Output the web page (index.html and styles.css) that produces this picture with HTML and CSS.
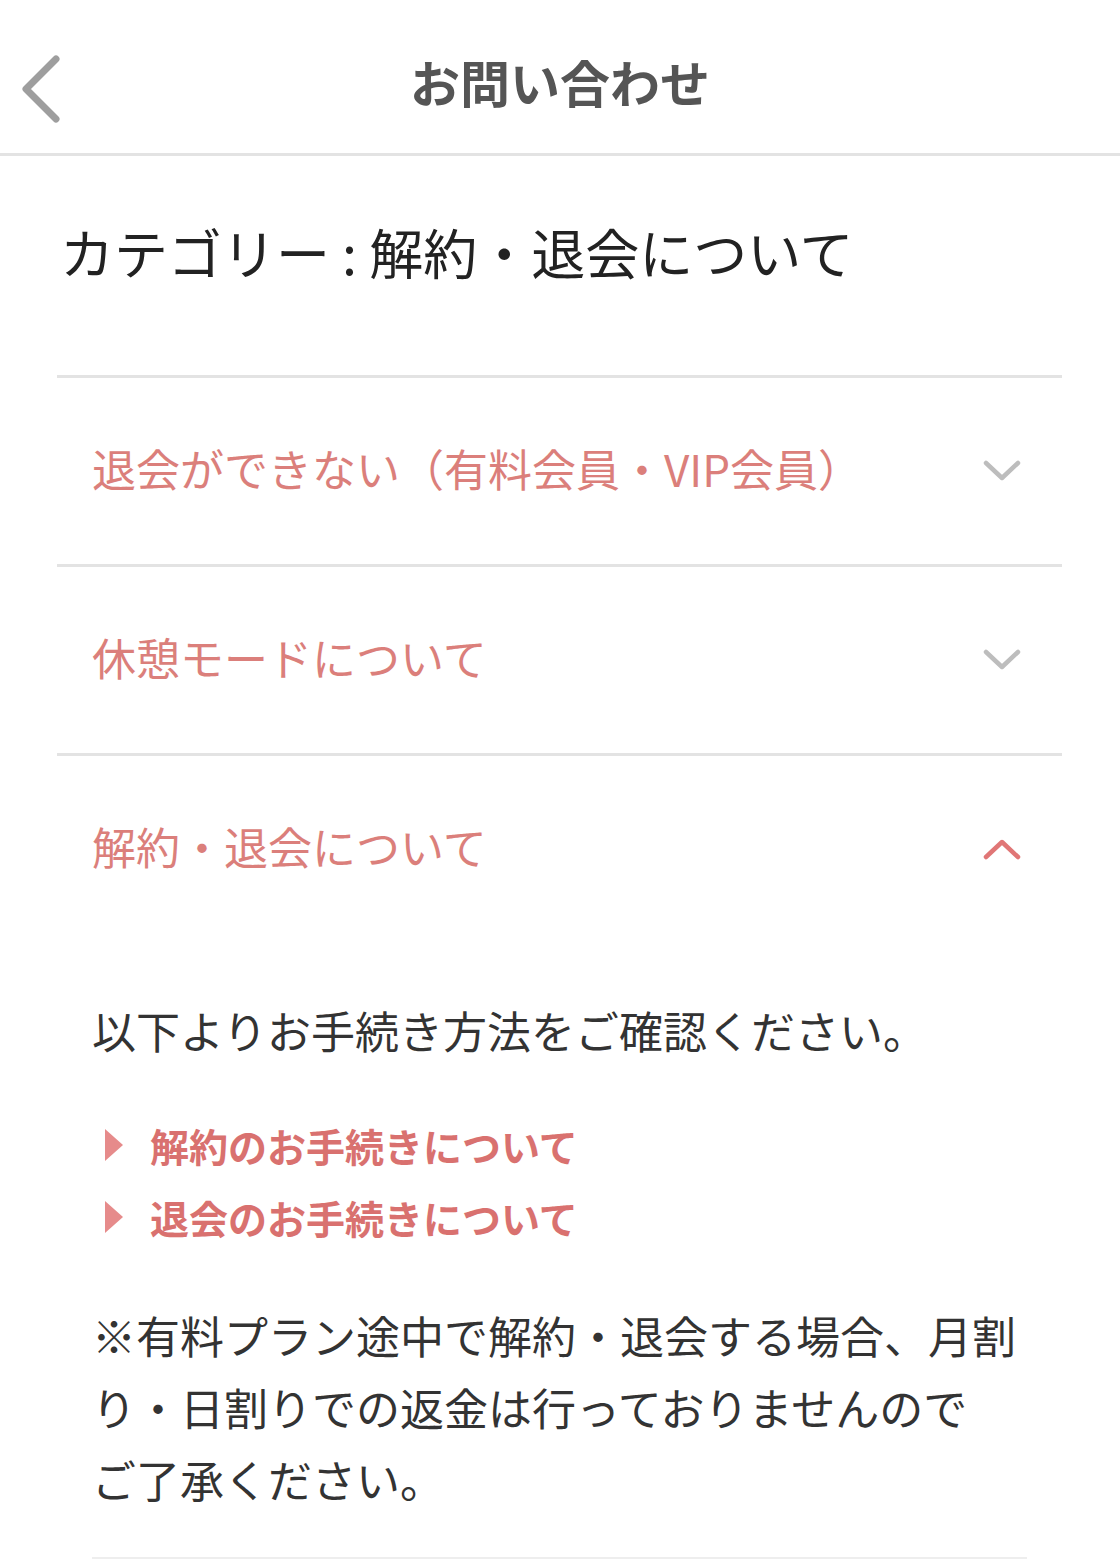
FILE: index.html
```html
<!DOCTYPE html>
<html lang="ja">
<head>
<meta charset="utf-8">
<title>お問い合わせ</title>
<link rel="stylesheet" href="styles.css">
</head>
<body>
<header class="topbar">
  <a class="back" href="#" aria-label="戻る">
    <svg width="50" height="70" viewBox="0 0 50 70"><path d="M38 6 L8 36 L38 66" fill="none" stroke="#9e9e9e" stroke-width="7" stroke-linecap="round" stroke-linejoin="round"/></svg>
  </a>
  <h1 class="title">お問い合わせ</h1>
</header>
<main>
  <h2 class="category">カテゴリー : 解約・退会について</h2>
  <section class="accordion">
    <div class="item">
      <div class="item-head">
        <span class="item-title">退会ができない（有料会員・VIP会員）</span>
        <svg class="chev" width="38" height="22" viewBox="0 0 38 22"><path d="M3 3 L19 18 L35 3" fill="none" stroke="#bdbdbd" stroke-width="4.5" stroke-linecap="round" stroke-linejoin="round"/></svg>
      </div>
    </div>
    <div class="item">
      <div class="item-head">
        <span class="item-title">休憩モードについて</span>
        <svg class="chev" width="38" height="22" viewBox="0 0 38 22"><path d="M3 3 L19 18 L35 3" fill="none" stroke="#bdbdbd" stroke-width="4.5" stroke-linecap="round" stroke-linejoin="round"/></svg>
      </div>
    </div>
    <div class="item open">
      <div class="item-head">
        <span class="item-title">解約・退会について</span>
        <svg class="chev" width="38" height="22" viewBox="0 0 38 22"><path d="M3 19 L19 4 L35 19" fill="none" stroke="#e07676" stroke-width="4.5" stroke-linecap="round" stroke-linejoin="round"/></svg>
      </div>
      <div class="item-body">
        <p class="lead">以下よりお手続き方法をご確認ください。</p>
        <ul class="links">
          <li><span class="tri"></span><a href="#">解約のお手続きについて</a></li>
          <li><span class="tri"></span><a href="#">退会のお手続きについて</a></li>
        </ul>
        <p class="note">※有料プラン途中で解約・退会する場合、月割り・日割りでの返金は行っておりませんので<span class="nobr">ご了承ください。</span></p>
      </div>
    </div>
  </section>
</main>
</body>
</html>
```
FILE: styles.css
```css
* { box-sizing: border-box; }
html, body {
  margin: 0;
  padding: 0;
  background: #ffffff;
  font-family: "Noto Sans CJK JP", "Noto Sans", sans-serif;
}
.topbar {
  position: relative;
  height: 156px;
  border-bottom: 3px solid #e3e3e3;
  display: flex;
  align-items: center;
  justify-content: center;
}
.back {
  position: absolute;
  left: 18px;
  top: 53px;
  display: block;
  width: 50px;
  height: 70px;
}
.back svg { display: block; }
.title {
  margin: 0;
  font-size: 50px;
  font-weight: 700;
  color: #555555;
  line-height: 1;
  padding-top: 8px;
}
.category {
  margin: 0;
  padding: 54px 0 81px 60px;
  font-size: 54px;
  font-weight: 400;
  line-height: 84px;
  color: #222222;
}
.accordion {
  margin: 0 58px 0 57px;
  border-top: 3px solid #e3e3e3;
}
.item {
  border-bottom: 3px solid #e3e3e3;
}
.item.open {
  border-bottom: none;
}
.item-head {
  height: 186px;
  display: flex;
  align-items: center;
  justify-content: space-between;
  padding: 0 41px 0 35px;
}
.item-title {
  font-size: 44px;
  color: #db7f7b;
  line-height: 1;
  padding-bottom: 6px;
}
.chev { display: block; }
.item-body {
  padding: 52px 35px 0 35px;
}
.lead {
  margin: 0;
  font-size: 44px;
  line-height: 72px;
  color: #333333;
}
.links {
  list-style: none;
  margin: 43px 0 0 0;
  padding: 0 0 0 13px;
}
.links li {
  display: flex;
  align-items: center;
  height: 72px;
}
.tri {
  width: 0;
  height: 0;
  border-top: 16px solid transparent;
  border-bottom: 16px solid transparent;
  border-left: 18px solid #e68b8b;
  margin-right: 27px;
}
.links a {
  font-size: 39px;
  font-weight: 700;
  color: #d9716f;
  text-decoration: none;
  line-height: 1;
}
.note {
  margin: 46px 0 0 0;
  padding-bottom: 42px;
  font-size: 44px;
  line-height: 72px;
  color: #333333;
  border-bottom: 2px solid #eeeeee;
}
.nobr { white-space: nowrap; }
```
